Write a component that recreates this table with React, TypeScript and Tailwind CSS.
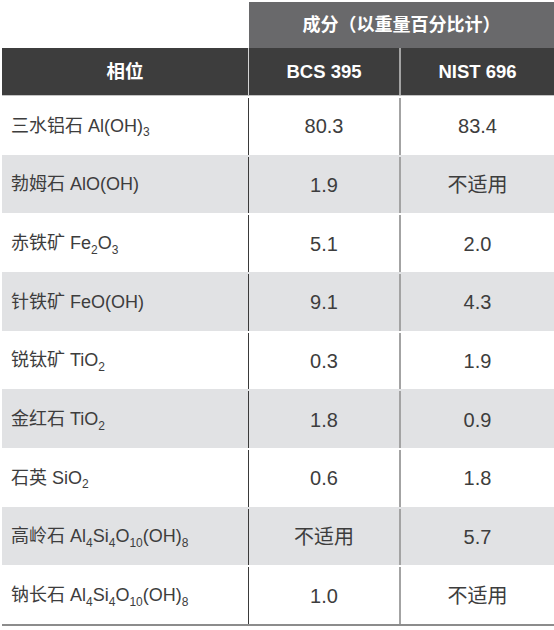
import React from "react";

const F = { fontFamily: '"Liberation Sans", "Noto Sans CJK SC", sans-serif' };

function S({ children }: { children: React.ReactNode }) {
  return <span className="text-[12px] relative top-[6px] leading-none">{children}</span>;
}

const rows: { name: React.ReactNode; a: string; b: string }[] = [
  { name: <>三水铝石 Al(OH)<S>3</S></>, a: "80.3", b: "83.4" },
  { name: <>勃姆石 AlO(OH)</>, a: "1.9", b: "不适用" },
  { name: <>赤铁矿 Fe<S>2</S>O<S>3</S></>, a: "5.1", b: "2.0" },
  { name: <>针铁矿 FeO(OH)</>, a: "9.1", b: "4.3" },
  { name: <>锐钛矿 TiO<S>2</S></>, a: "0.3", b: "1.9" },
  { name: <>金红石 TiO<S>2</S></>, a: "1.8", b: "0.9" },
  { name: <>石英 SiO<S>2</S></>, a: "0.6", b: "1.8" },
  { name: <>高岭石 Al<S>4</S>Si<S>4</S>O<S>10</S>(OH)<S>8</S></>, a: "不适用", b: "5.7" },
  { name: <>钠长石 Al<S>4</S>Si<S>4</S>O<S>10</S>(OH)<S>8</S></>, a: "1.0", b: "不适用" },
];

export default function App() {
  return (
    <div className="w-[554px] h-[630px] bg-white pl-[2px] pt-[2px]" style={F}>
      <div className="flex h-[46px]">
        <div className="w-[247px]" />
        <div className="flex-1 bg-[#69696b] flex items-center justify-center text-white font-bold text-[18px]">
          成分（以重量百分比计）
        </div>
      </div>
      <div className="flex h-[47px] bg-[#3d3d3d] text-white font-bold text-[18.5px] border-b border-[#c4c4c4] box-content">
        <div className="w-[246px] flex items-center justify-center">相位</div>
        <div className="w-px bg-[#d4d4d4]" />
        <div className="w-[150px] flex items-center justify-center">BCS 395</div>
        <div className="w-[2px] bg-[#a3a3a3]" />
        <div className="flex-1 flex items-center justify-center">NIST 696</div>
      </div>
      <div className="border-b-2 border-[#8c8c8c]">
        {rows.map((r, i) => (
          <div
            key={i}
            className={`flex h-[58.67px] text-[#3d3d3d] pt-[2px] ${i % 2 === 1 ? "bg-[#e1e2e4]" : "bg-white"}`}
          >
            <div className="w-[246px] flex items-center pl-[9px] whitespace-nowrap text-[18px]">{r.name}</div>
            <div className="w-px bg-[#3a3a3a]" />
            <div className="w-[150px] flex items-center justify-center text-[20px]">{r.a}</div>
            <div className="w-[2px] bg-[#a3a3a3]" />
            <div className="flex-1 flex items-center justify-center text-[20px]">{r.b}</div>
          </div>
        ))}
      </div>
    </div>
  );
}
